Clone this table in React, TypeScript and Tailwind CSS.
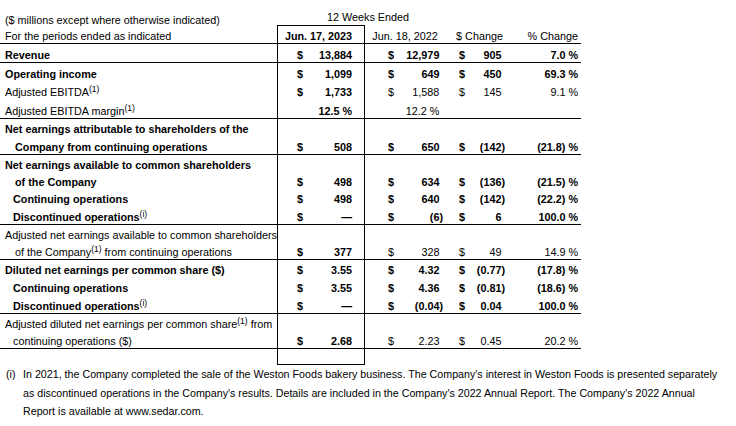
import type { ReactNode } from 'react';

type Row = {
  label?: ReactNode;
  pl?: number;
  h: number;
  bold?: boolean;
  v?: [string, string, string, string];
  d?: [boolean, boolean, boolean];
};

const Sup = ({ children }: { children: ReactNode }) => (
  <sup className="font-normal text-[8.5px]">{children}</sup>
);

const groups: Row[][] = [
  [{ label: 'Revenue', h: 18, bold: true, v: ['13,884', '12,979', '905', '7.0 %'], d: [true, true, true] }],
  [
    { label: 'Operating income', h: 18, bold: true, v: ['1,099', '649', '450', '69.3 %'], d: [true, true, true] },
    { label: <>Adjusted EBITDA<Sup>(1)</Sup></>, h: 18, v: ['1,733', '1,588', '145', '9.1 %'], d: [true, true, true] },
    { label: <>Adjusted EBITDA margin<Sup>(1)</Sup></>, h: 19, v: ['12.5 %', '12.2 %', '', ''], d: [false, false, false] },
  ],
  [
    { label: 'Net earnings attributable to shareholders of the', h: 17, bold: true },
    { label: 'Company from continuing operations', pl: 15, h: 18, bold: true, v: ['508', '650', '(142)', '(21.8) %'], d: [true, true, true] },
  ],
  [
    { label: 'Net earnings available to common shareholders', h: 17, bold: true },
    { label: 'of the Company', pl: 15, h: 17, bold: true, v: ['498', '634', '(136)', '(21.5) %'], d: [true, true, true] },
    { label: 'Continuing operations', pl: 13, h: 17, bold: true, v: ['498', '640', '(142)', '(22.2) %'], d: [true, true, true] },
    { label: <>Discontinued operations<Sup>(i)</Sup></>, pl: 13, h: 18, bold: true, v: ['—', '(6)', '6', '100.0 %'], d: [true, true, true] },
  ],
  [
    { label: 'Adjusted net earnings available to common shareholders', h: 17 },
    { label: <>of the Company<Sup>(1)</Sup> from continuing operations</>, pl: 15, h: 17, v: ['377', '328', '49', '14.9 %'], d: [true, true, true] },
  ],
  [
    { label: 'Diluted net earnings per common share ($)', h: 17, bold: true, v: ['3.55', '4.32', '(0.77)', '(17.8) %'], d: [true, true, true] },
    { label: 'Continuing operations', pl: 13, h: 18, bold: true, v: ['3.55', '4.36', '(0.81)', '(18.6) %'], d: [true, true, true] },
    { label: <>Discontinued operations<Sup>(i)</Sup></>, pl: 13, h: 18, bold: true, v: ['—', '(0.04)', '0.04', '100.0 %'], d: [true, true, true] },
  ],
  [
    { label: <>Adjusted diluted net earnings per common share<Sup>(1)</Sup> from</>, h: 17 },
    { label: 'continuing operations ($)', pl: 13, h: 17, v: ['2.68', '2.23', '0.45', '20.2 %'], d: [true, true, true] },
  ],
];

// numbers without a closing paren keep the paren's room, as in the source sheet
function Num({ v }: { v: string }) {
  const hang = v !== '' && !v.endsWith(')');
  return (
    <span className="ml-auto">
      {v}
      {hang && <span className="invisible">)</span>}
    </span>
  );
}

function TableRow({ r }: { r: Row }) {
  const w = r.bold ? 'font-bold' : 'font-normal';
  return (
    <div className="flex items-end" style={{ height: r.h }}>
      <div className={`w-[277px] shrink-0 whitespace-nowrap ${w}`} style={{ paddingLeft: r.pl ?? 5 }}>
        {r.label}
      </div>
      <div className="w-[88px] shrink-0 h-full border-x border-black flex items-end pl-[19px] pr-[12px] font-bold">
        {r.v && r.d?.[0] && <span>$</span>}
        {r.v && <span className="ml-auto">{r.v[0]}</span>}
      </div>
      <div className={`w-[80px] shrink-0 flex pl-[23px] pr-[2px] ${w}`}>
        {r.v && r.d?.[1] && <span>$</span>}
        {r.v && <Num v={r.v[1]} />}
      </div>
      <div className={`w-[65px] shrink-0 flex pl-[14px] pr-[5px] ${w}`}>
        {r.v && r.d?.[2] && <span>$</span>}
        {r.v && <Num v={r.v[2]} />}
      </div>
      <div className={`w-[71px] shrink-0 text-right pr-[3px] whitespace-nowrap ${w}`}>{r.v?.[3]}</div>
    </div>
  );
}

export default function App() {
  return (
    <main
      className="min-h-screen w-[736px] h-[426px] bg-white text-black text-[10.8px] leading-[14px] pt-[7px] whitespace-nowrap"
      style={{ fontFamily: '"Liberation Sans", Arial, sans-serif' }}
    >
      <div className="w-[581px]">
        {/* title row */}
        <div className="flex items-end h-[18px]">
          <div className="w-[327px] shrink-0 pl-[5px] mb-[-2px]">($ millions except where otherwise indicated)</div>
          <div className="mb-[1px]">12 Weeks Ended</div>
        </div>

        {/* column headers */}
        <div className="flex items-end h-[19px] border-b border-black">
          <div className="w-[277px] shrink-0 pl-[5px]">For the periods ended as indicated</div>
          <div className="w-[88px] shrink-0 h-full border-x border-t border-black flex items-end justify-center pr-[5px] font-bold">
            Jun. 17, 2023
          </div>
          <div className="w-[80px] shrink-0 text-center">Jun. 18, 2022</div>
          <div className="w-[65px] shrink-0 text-center pl-[4px]">$ Change</div>
          <div className="w-[71px] shrink-0 text-right pr-[3px]">% Change</div>
        </div>

        {groups.map((g, i) => (
          <div key={i} className="border-b border-black">
            {g.map((r, j) => (
              <TableRow key={j} r={r} />
            ))}
          </div>
        ))}

        <div className="flex h-[16px]">
          <div className="w-[277px] shrink-0" />
          <div className="w-[88px] shrink-0 border-x border-b border-black" />
        </div>
      </div>

      {/* footnote */}
      <div className="flex text-[10.7px] leading-[18.5px] mt-[0px]">
        <div className="w-[23px] shrink-0 pl-[6px]">(i)</div>
        <div>
          <div>
            In 2021, the Company completed the sale of the Weston Foods bakery business. The Company's interest in Weston Foods is presented separately
          </div>
          <div>
            as discontinued operations in the Company's results. Details are included in the Company's 2022 Annual Report. The Company's 2022 Annual
          </div>
          <div>Report is available at www.sedar.com.</div>
        </div>
      </div>
    </main>
  );
}
